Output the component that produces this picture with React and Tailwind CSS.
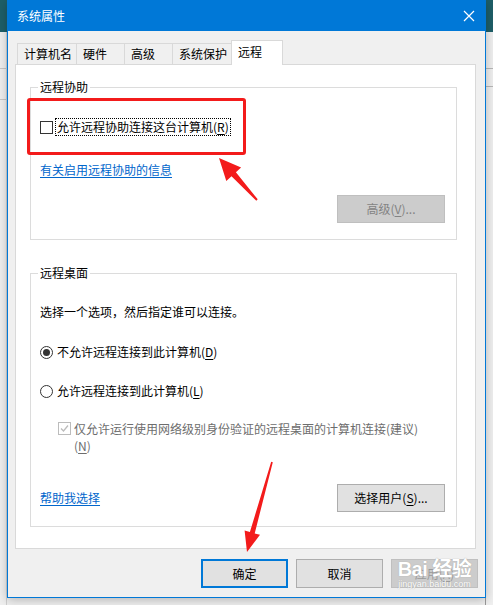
const font = "font-['Noto_Sans_CJK_SC','Noto_Sans',sans-serif]";

function Tab({ label, w, active }) {
  if (active) {
    return (
      <div className={`relative z-10 -mb-px h-[25px] ${w} border border-b-0 border-[#d9d9d9] bg-white pl-[6px] pt-[2px] leading-[18px]`}>
        {label}
      </div>
    );
  }
  return (
    <div className={`h-[21px] ${w} border-t border-l border-[#d9d9d9] bg-[#f0f0f0] pl-[6px] pt-[1px] leading-[18px]`}>
      {label}
    </div>
  );
}

function Key({ k }) {
  return (
    <>
      (<span className="underline underline-offset-2">{k}</span>)
    </>
  );
}

function Radio({ checked, children }) {
  return (
    <div className="flex h-[16px] items-center">
      <span className="flex h-[13px] w-[13px] items-center justify-center rounded-full border border-[#333] bg-white">
        {checked && <span className="h-[7px] w-[7px] rounded-full bg-[#333]" />}
      </span>
      <span className="ml-[4px] leading-[16px]">{children}</span>
    </div>
  );
}

function Button({ children, className = '' }) {
  return (
    <div className={`flex h-[28px] items-center justify-center border border-[#adadad] bg-[#e1e1e1] leading-[16px] ${className}`}>
      {children}
    </div>
  );
}

export default function App() {
  return (
    <div className={`relative h-[605px] w-[493px] overflow-hidden bg-[#e9e9e9] text-[12px] text-black ${font}`}>
      {/* window behind the dialog */}
      <div className="flex h-full flex-col">
        <div className="h-[32px] bg-[#1e5f68]" />
        <div className="flex flex-1 justify-between bg-[#f0f0f0]">
          <div className="flex w-[7px] flex-col border-r border-[#d0d0d0]">
            <div className="mt-[36px] h-px bg-[#c8c8c8]" />
            <div className="mt-[30px] h-px bg-[#c8c8c8]" />
          </div>
          <div className="flex w-[8px] flex-col border-l border-[#9a9a9a]">
            <div className="mt-[36px] h-px bg-[#b8b8b8]" />
            <div className="mt-[17px] h-px bg-[#b8b8b8]" />
          </div>
        </div>
      </div>

      {/* dialog */}
      <div className="absolute left-[7px] top-0 flex h-[598px] w-[479px] flex-col border border-[#0078d7] bg-[#f0f0f0] shadow-[0_2px_10px_rgba(0,0,0,0.25)]">
        <div className="flex h-[30px] items-center justify-between bg-[#0078d7] pl-[9px] pr-[8px] text-white">
          <span className="leading-[16px]">系统属性</span>
          <svg width="12" height="12" viewBox="0 0 12 12" className="mr-[2px]">
            <path d="M1 1 L11 11 M11 1 L1 11" stroke="white" strokeWidth="1.2" />
          </svg>
        </div>

        <div className="mx-[7px] mt-[9px] flex flex-col">
          <div className="flex items-end pl-[2px]">
            <Tab label="计算机名" w="w-[59px]" />
            <Tab label="硬件" w="w-[48px]" />
            <Tab label="高级" w="w-[48px]" />
            <Tab label="系统保护" w="w-[59px]" />
            <Tab label="远程" w="w-[52px]" active />
          </div>

          <div className="flex h-[485px] w-[461px] flex-col border border-[#d9d9d9] bg-white pl-[14px]">
            <fieldset className="mt-[14px] flex h-[161px] w-[427px] flex-col border border-[#dcdcdc] pl-[9px]">
              <legend className="ml-[-2px] px-[2px] leading-[16px]">远程协助</legend>
              <div className="mt-[23px] flex h-[18px] items-center">
                <span className="h-[13px] w-[13px] border border-[#333] bg-white" />
                <span className="ml-[2px] border border-dotted border-black px-[1px] leading-[16px]">
                  允许远程协助连接这台计算机<Key k="R" />
                </span>
              </div>
              <span className="mt-[26px] self-start leading-[16px] text-[#0066cc] underline underline-offset-2">
                有关启用远程协助的信息
              </span>
              <div className="mt-[17px] flex justify-end pr-[11px]">
                <div className="flex h-[28px] w-[108px] items-center justify-center border border-[#bfbfbf] bg-[#cccccc] leading-[16px] text-[#838383]">
                  高级<Key k="V" />...
                </div>
              </div>
            </fieldset>

            <fieldset className="mt-[25px] flex h-[262px] w-[427px] flex-col border border-[#dcdcdc] pl-[9px]">
              <legend className="ml-[-2px] px-[2px] leading-[16px]">远程桌面</legend>
              <p className="mt-[23px] leading-[16px]">选择一个选项，然后指定谁可以连接。</p>
              <div className="mt-[24px]">
                <Radio checked>
                  不允许远程连接到此计算机<Key k="D" />
                </Radio>
              </div>
              <div className="mt-[23px]">
                <Radio>
                  允许远程连接到此计算机<Key k="L" />
                </Radio>
              </div>
              <div className="mt-[21px] flex pl-[18px]">
                <span className="mt-[2px] flex h-[13px] w-[13px] items-center justify-center border border-[#bcbcbc] bg-white">
                  <svg width="9" height="9" viewBox="0 0 9 9">
                    <path d="M1 4.5 L3.5 7 L8 1.5" fill="none" stroke="#bcbcbc" strokeWidth="1.3" />
                  </svg>
                </span>
                <p className="ml-[3px] w-[360px] leading-[17px] text-[#6d6d6d]">
                  仅允许运行使用网络级别身份验证的远程桌面的计算机连接(建议)
                  <br />
                  <Key k="N" />
                </p>
              </div>
              <div className="mt-[30px] flex h-[28px] items-center justify-between pr-[11px]">
                <span className="leading-[16px] text-[#0066cc] underline underline-offset-2">帮助我选择</span>
                <Button className="w-[108px]">
                  选择用户<Key k="S" />...
                </Button>
              </div>
            </fieldset>
          </div>

          <div className="mt-[10px] flex justify-end gap-[8px] pr-[-2px]">
            <div className="flex h-[29px] w-[87px] items-center justify-center border-2 border-[#0078d7] bg-[#e1e1e1] leading-[16px]">
              确定
            </div>
            <Button className="h-[29px] w-[87px]">取消</Button>
            <div className="relative flex h-[29px] w-[87px] items-center justify-center border border-[#bfbfbf] bg-[#cccccc] leading-[16px] text-[#9a9a9a]">
              应用<Key k="A" />
              <div className="absolute inset-0 flex flex-col items-center justify-center text-white [text-shadow:0_0_1px_#9a9a9a]">
                <span className="font-['Liberation_Sans','Noto_Sans_CJK_SC',sans-serif] text-[20px] font-bold leading-[20px] tracking-[-0.5px]">Bai 经验</span>
                <span className="font-['Liberation_Sans',sans-serif] text-[9px] leading-[10px]">jingyan.baidu.com</span>
              </div>
            </div>
          </div>
        </div>
      </div>

      {/* annotations */}
      <div className="absolute left-[27px] top-[98px] h-[57px] w-[219px] rounded-[3px] border-[3px] border-[#f31b1b]" />
      <svg className="pointer-events-none absolute left-0 top-0" width="493" height="605" viewBox="0 0 493 605">
        <polygon
          points="219,158 241.1,167.6 235.9,172.3 257.7,199.3 256.3,200.7 231.5,176.3 226.3,181"
          fill="#f31b1b"
        />
        <polygon
          points="247,552 260,534.8 254.7,533.4 272.8,462.2 271.2,461.8 249.9,532 244.6,530.6"
          fill="#f31b1b"
        />
      </svg>
    </div>
  );
}
